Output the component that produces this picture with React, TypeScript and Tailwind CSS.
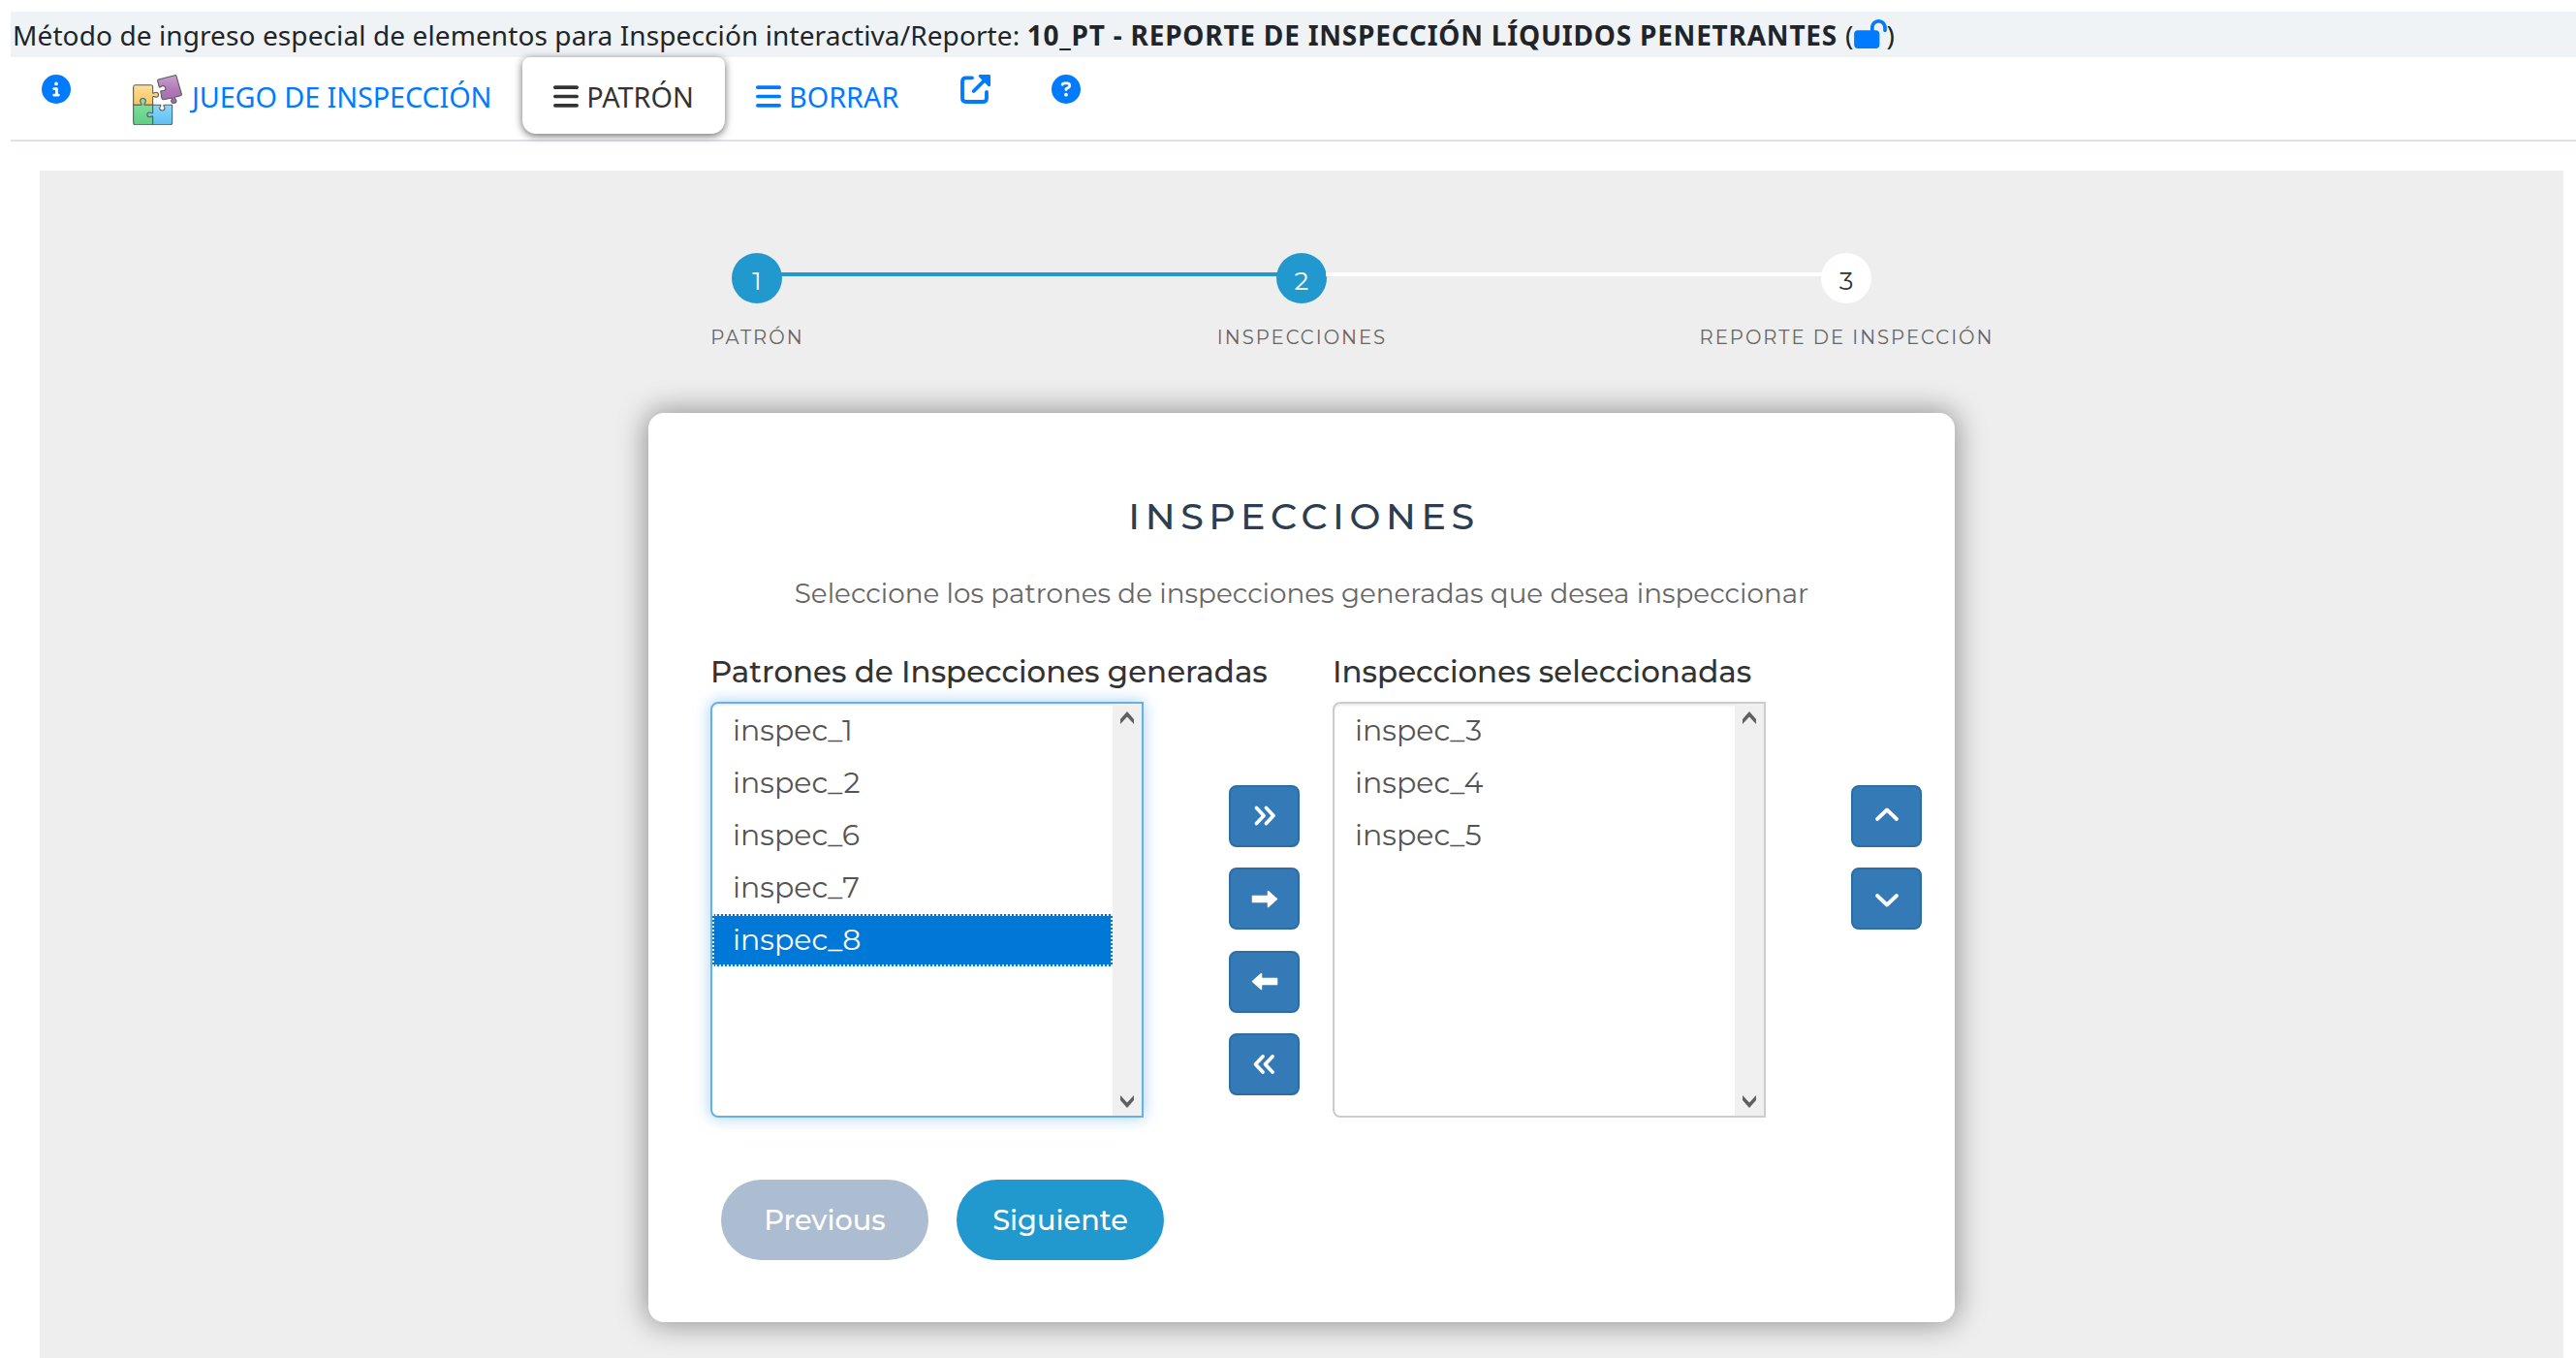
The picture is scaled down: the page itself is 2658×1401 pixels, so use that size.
import type { ReactNode } from 'react';
import clsx from 'clsx';
import { FaBars, FaCircleInfo, FaCircleQuestion, FaLockOpen } from 'react-icons/fa6';

const steps = ['PATRÓN', 'INSPECCIONES', 'REPORTE DE INSPECCIÓN'];
const currentStep = 2;

const generated = ['inspec_1', 'inspec_2', 'inspec_6', 'inspec_7', 'inspec_8'];
const selected = ['inspec_3', 'inspec_4', 'inspec_5'];

function PuzzleIcon() {
  return (
    <svg viewBox="0 0 156 156" className="w-[52px] h-[52px]" stroke="#5a5a5a" strokeWidth="3.2" strokeLinejoin="round">
      <defs>
        <linearGradient id="yellow" x1="0" y1="0" x2="0" y2="1">
          <stop offset="0" stopColor="#fde3a8" />
          <stop offset="0.3" stopColor="#fbd586" />
          <stop offset="1" stopColor="#f8c765" />
        </linearGradient>
        <linearGradient id="green" x1="0" y1="0" x2="0" y2="1">
          <stop offset="0" stopColor="#8ae0a6" />
          <stop offset="1" stopColor="#5cd080" />
        </linearGradient>
        <linearGradient id="blue" x1="0" y1="0" x2="0" y2="1">
          <stop offset="0" stopColor="#8bd6fb" />
          <stop offset="1" stopColor="#5cc0f4" />
        </linearGradient>
        <linearGradient id="purple" x1="0" y1="0" x2="0" y2="1">
          <stop offset="0" stopColor="#c9a0cf" />
          <stop offset="0.5" stopColor="#b07bb8" />
          <stop offset="1" stopColor="#a069a9" />
        </linearGradient>
      </defs>
      <path fill="url(#yellow)" d="M7 32H56Q62 32 62 38V57C66 59 67 55 72 55C82 55 82 70 72 70C67 70 66 66 62 68V94H2V38Q2 32 7 32Z" />
      <path fill="url(#green)" d="M2 94H27C29 90 23 88 23 82C23 71 40 71 40 82C40 88 34 90 36 94H62V155H8Q2 155 2 149Z" />
      <path fill="url(#blue)" d="M62 94H86C88 98 83 99 83 104C83 113 99 113 99 104C99 99 94 98 96 94H122V149Q122 155 116 155H62V129C58 127 57 131 52 131C42 131 42 117 52 117C57 117 58 121 62 119Z" />
      <path fill="url(#purple)" d="M80 15L130 2Q134 1 135 5L151 60Q152 64 148 65L130 70C129 75 135 76 135 81C135 91 119 91 119 81C119 77 124 76 122 72L95 77Q91 78 90 74L86 51C91 49 93 52 98 49C105 44 100 34 92 35C87 36 86 40 82 39L77 20Q76 16 80 15Z" />
    </svg>
  );
}

function ExternalLinkIcon() {
  return (
    <svg viewBox="0 0 93 90" className="w-[31px] h-[30px]" fill="none" stroke="currentColor" strokeWidth="11.5" strokeLinecap="round">
      <path d="M36 10H17Q6 10 6 21V73Q6 84 17 84H70Q81 84 81 73V54" />
      <path d="M41 51L76 16" />
      <path d="M60 4H89V33Z" fill="currentColor" strokeWidth="8" strokeLinejoin="round" />
    </svg>
  );
}

function Glyph({ d, filled }: { d: string; filled?: boolean }) {
  return (
    <svg
      viewBox="0 0 28 28"
      className="w-7 h-7"
      fill={filled ? 'currentColor' : 'none'}
      stroke="currentColor"
      strokeWidth={filled ? 1.5 : 3.8}
      strokeLinecap="round"
      strokeLinejoin="round"
    >
      <path d={d} />
    </svg>
  );
}

function MoveButton({ label, children }: { label: string; children: ReactNode }) {
  return (
    <button
      aria-label={label}
      className="flex h-16 w-[73px] items-center justify-center rounded-lg border-2 border-[#2e6da4] bg-[#337ab7] text-white"
    >
      {children}
    </button>
  );
}

interface ListProps {
  title: string;
  items: string[];
  active?: string;
  focused?: boolean;
  children: ReactNode;
}

function InspectionList({ title, items, active, focused, children }: ListProps) {
  return (
    <div className="w-[642px]">
      <h5 className="h-10 whitespace-nowrap text-[30.9px] font-medium leading-10 text-[#333]">{title}</h5>
      <div className="mt-[11px] flex">
        <div
          className={clsx(
            'flex h-[429px] w-[447px] rounded-l-lg border-2',
            focused
              ? 'border-[#66afe9] shadow-[inset_0_2px_2px_rgba(0,0,0,0.075),0_0_16px_rgba(102,175,233,0.6)]'
              : 'border-[#ccc] shadow-[inset_0_2px_2px_rgba(0,0,0,0.075)]'
          )}
        >
          <ul className="flex-1 pt-px">
            {items.map((item) => (
              <li
                key={item}
                className={clsx(
                  'h-[54px] pl-[21px] text-[30px] leading-[53px]',
                  item === active
                    ? 'bg-[#0078d7] text-white outline-2 -outline-offset-2 outline-dotted outline-[#d9edfc]'
                    : 'text-[#555]'
                )}
              >
                {item}
              </li>
            ))}
          </ul>
          {/* Scrollbar */}
          <div className="flex w-[30px] flex-col items-center justify-between bg-[#f0f0f0] py-2 text-[#606060]">
            <svg viewBox="0 0 14 13" className="w-3.5 h-[13px]" fill="currentColor"><path d="M0 8L7 0L14 8V13L7 5.5L0 13Z" /></svg>
            <svg viewBox="0 0 14 13" className="w-3.5 h-[13px]" fill="currentColor"><path d="M0 5L7 13L14 5V0L7 7.5L0 0Z" /></svg>
          </div>
        </div>
        <div className="ml-[88px] mt-[86px] flex flex-col gap-[21.4px]">{children}</div>
      </div>
    </div>
  );
}

export default function App() {
  return (
    <div className="flex h-[1401px] flex-col overflow-hidden bg-white pl-[11px] pt-3 font-['Noto_Sans',sans-serif] text-[28px] text-[#212529]">
      {/* Title bar */}
      <div className="flex h-[47px] items-center bg-[#eff3f6] pl-[2px] pt-px leading-[46px] tracking-[0.1px]">
        <span className="whitespace-pre">Método de ingreso especial de elementos para Inspección interactiva/Reporte: </span>
        <b className="whitespace-nowrap tracking-[0.78px]">10_PT - REPORTE DE INSPECCIÓN LÍQUIDOS PENETRANTES</b>
        <span className="pl-2">(</span>
        <FaLockOpen className="mb-[2px] h-[30px] w-[34px] text-[#007bff]" />
        <span>)</span>
      </div>

      {/* Tabs */}
      <nav className="flex h-[87px] shrink-0 items-start border-b-2 border-[#dee2e6] text-[28.8px] text-[#007bff]">
        <a className="w-[126px] pl-8 pt-[18px]">
          <FaCircleInfo className="h-[30px] w-[30px]" />
        </a>
        <a className="flex h-[79px] w-[402px] items-center whitespace-nowrap">
          <span className="mt-[9px]"><PuzzleIcon /></span>
          <span className="pl-[9px] pt-[2px] tracking-[-0.1px]">JUEGO DE INSPECCIÓN</span>
        </a>
        <a className="flex h-[79px] w-[209px] items-center justify-center gap-2 rounded-b-[14px] rounded-t-lg bg-white pt-[2px] text-[#333] shadow-[0_2px_8px_rgba(0,0,0,0.6)]">
          <FaBars className="h-[31px] w-[26px]" />
          PATRÓN
        </a>
        <a className="flex h-[79px] w-[243px] items-center gap-2 pl-8 pt-[2px]">
          <FaBars className="h-[31px] w-[26px]" />
          BORRAR
        </a>
        <a className="w-[94px] pt-[18px]">
          <ExternalLinkIcon />
        </a>
        <a className="pt-[18px]">
          <FaCircleQuestion className="h-[30px] w-[30px]" />
        </a>
      </nav>

      <main className="ml-[30px] mr-[13px] mt-[30px] flex flex-1 flex-col items-center bg-[#eee] pt-[85px] font-['Montserrat','Inter',sans-serif]">
        {/* Progress */}
        <div className="flex w-[1176px] items-center">
          {steps.map((step, i) => (
            <div key={step} className={clsx('flex items-center', i > 0 && 'flex-1')}>
              {i > 0 && <span className={clsx('-mr-px -ml-px -mt-2 h-1 flex-1', i < currentStep ? 'bg-[#2198ce]' : 'bg-white')} />}
              <span
                className={clsx(
                  'flex h-[52px] w-[52px] items-center justify-center rounded-full pt-[6px] text-[26px] leading-none',
                  i < currentStep ? 'bg-[#2198ce] text-white' : 'bg-white text-[#333]'
                )}
              >
                {i + 1}
              </span>
            </div>
          ))}
        </div>
        <div className="mt-5 grid w-[1686px] grid-cols-3 text-center text-[19.6px] leading-[30px] tracking-[2px] text-[#666]">
          {steps.map((step) => (
            <span key={step} className="whitespace-nowrap pl-px">{step}</span>
          ))}
        </div>

        {/* Card */}
        <section className="mt-[63px] h-[938px] w-[1348px] shrink-0 rounded-2xl bg-white pl-16 pt-[75px] shadow-[0_0_30px_2px_rgba(0,0,0,0.4)]">
          <h2 className="-ml-16 pl-[5px] text-center text-[38px] font-medium leading-[64px] tracking-[5.6px] text-[#2c3e50]">INSPECCIONES</h2>
          <h3 className="-ml-16 mt-[27px] text-center text-[27.8px] font-normal leading-10 text-[#666]">
            Seleccione los patrones de inspecciones generadas que desea inspeccionar
          </h3>

          <div className="mt-[41px] flex">
            <InspectionList title="Patrones de Inspecciones generadas" items={generated} active="inspec_8" focused>
              <MoveButton label="Agregar todas"><Glyph d="M5.5 5.5L13 13.5L5.5 21.5M15.5 5.5L23 13.5L15.5 21.5" /></MoveButton>
              <MoveButton label="Agregar"><Glyph filled d="M1.5 11.5H17.5V6.5L26.5 14.5L17.5 22.5V17.5H1.5Z" /></MoveButton>
              <MoveButton label="Quitar"><Glyph filled d="M26.5 10.5H10.5V5.5L1.5 13.5L10.5 21.5V16.5H26.5Z" /></MoveButton>
              <MoveButton label="Quitar todas"><Glyph d="M12 6L4.5 14L12 22M22 6L14.5 14L22 22" /></MoveButton>
            </InspectionList>
            <InspectionList title="Inspecciones seleccionadas" items={selected}>
              <MoveButton label="Subir"><Glyph d="M4 17L14 7.5L24 17" /></MoveButton>
              <MoveButton label="Bajar"><Glyph d="M4 11L14 20.5L24 11" /></MoveButton>
            </InspectionList>
          </div>

          <div className="ml-[11px] mt-16 flex gap-[29px] text-[28.8px] font-medium text-white">
            <button className="h-[83px] w-[214px] rounded-full bg-[#adbdd1]">Previous</button>
            <button className="h-[83px] w-[214px] rounded-full bg-[#2198ce]">Siguiente</button>
          </div>
        </section>
      </main>
    </div>
  );
}
